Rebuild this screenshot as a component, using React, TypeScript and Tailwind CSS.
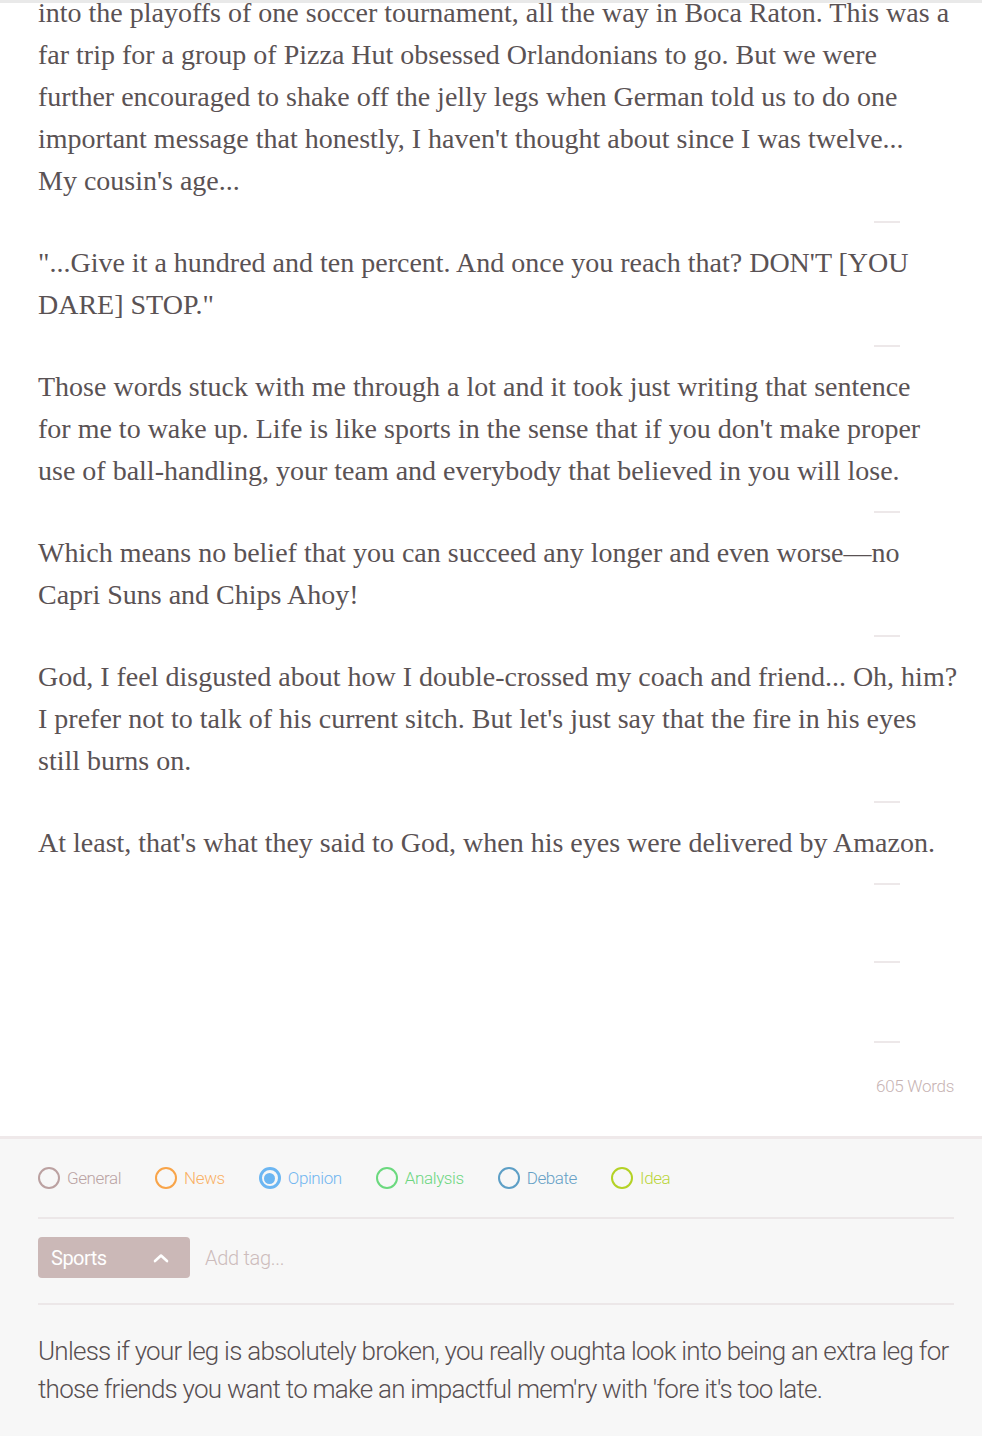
const paragraphs: string[][] = [
  [
    'into the playoffs of one soccer tournament, all the way in Boca Raton. This was a',
    'far trip for a group of Pizza Hut obsessed Orlandonians to go. But we were',
    'further encouraged to shake off the jelly legs when German told us to do one',
    "important message that honestly, I haven't thought about since I was twelve...",
    "My cousin's age...",
  ],
  [
    '"...Give it a hundred and ten percent. And once you reach that? DON\'T [YOU',
    'DARE] STOP."',
  ],
  [
    'Those words stuck with me through a lot and it took just writing that sentence',
    "for me to wake up. Life is like sports in the sense that if you don't make proper",
    'use of ball-handling, your team and everybody that believed in you will lose.',
  ],
  [
    'Which means no belief that you can succeed any longer and even worse\u2014no',
    'Capri Suns and Chips Ahoy!',
  ],
  [
    'God, I feel disgusted about how I double-crossed my coach and friend... Oh, him?',
    "I prefer not to talk of his current sitch. But let's just say that the fire in his eyes",
    'still burns on.',
  ],
  ["At least, that's what they said to God, when his eyes were delivered by Amazon."],
]

const categories = [
  { label: 'General', ring: 'border-[#bba1a1]', text: 'text-[#baa3a3]' },
  { label: 'News', ring: 'border-[#f8a449]', text: 'text-[#f9b064]' },
  { label: 'Opinion', ring: 'border-[#6cb6f2]', text: 'text-[#72b6f0]', checked: true },
  { label: 'Analysis', ring: 'border-[#6bd97e]', text: 'text-[#6cd680]' },
  { label: 'Debate', ring: 'border-[#5d9fc6]', text: 'text-[#659fc6]' },
  { label: 'Idea', ring: 'border-[#b4d225]', text: 'text-[#bad53a]' },
]

function Separator() {
  return (
    <div className="flex h-[40px] items-center justify-end pr-[54px]">
      <div className="h-[2px] w-[26px] bg-[#ede8e9]" />
    </div>
  )
}

export default function App() {
  const sans = { fontFamily: 'Roboto, sans-serif' }

  return (
    <div className="flex h-[1436px] flex-col overflow-hidden bg-white">
      {/* Editor */}
      <div className="border-t-[3px] border-[#e9e9e9] pl-[38px] pr-[28px]">
        <div className="-mt-[11px] font-['Liberation_Serif',serif] text-[28px] leading-[42px] text-[#5a5254]">
          {paragraphs.map((lines, i) => (
            <div key={i}>
              <p>
                {lines.map((line) => (
                  <span key={line} className="block whitespace-nowrap">
                    {line}
                  </span>
                ))}
              </p>
              <Separator />
            </div>
          ))}
          <div className="h-[38px]" />
          <Separator />
          <div className="h-[40px]" />
          <Separator />
        </div>

        <div
          className="mt-[14px] pb-[40px] text-right text-[17px] font-light leading-[20px] tracking-[-0.3px] text-[#c7b3b3]"
          style={sans}
        >
          605 Words
        </div>
      </div>

      {/* Publish options */}
      <div className="flex-1 border-t-[3px] border-[#efe9ea] bg-[#f7f7f7] pl-[38px] pr-[28px]" style={sans}>
        <div className="flex h-[80px] items-center gap-[34px] border-b-2 border-[#ece7e8]">
          {categories.map((c) => (
            <label key={c.label} className="flex items-center gap-[7px]">
              <span
                className={`flex h-[22px] w-[22px] items-center justify-center rounded-full ${
                  c.checked ? 'border-[3px]' : 'border-2'
                } ${c.ring}`}
              >
                {c.checked && <span className="h-[11px] w-[11px] rounded-full bg-[#6cb6f2]" />}
              </span>
              <span className={`text-[17px] font-light leading-none tracking-[-0.4px] ${c.text}`}>{c.label}</span>
            </label>
          ))}
        </div>

        <div className="flex items-center gap-[15px] border-b-2 border-[#ece7e8] pt-[18px] pb-[25px]">
          <div className="flex h-[41px] w-[152px] items-center justify-between rounded-[4px] bg-[#cbb8b7] pl-[13px] pr-[21px]">
            <span className="text-[20px] leading-none tracking-[-0.5px] text-white">Sports</span>
            <svg width="16" height="10" viewBox="0 0 16 10" fill="none">
              <path d="M2 8 L8 2.5 L14 8" stroke="white" strokeWidth="2.6" strokeLinecap="round" strokeLinejoin="round" />
            </svg>
          </div>
          <span className="text-[20px] font-light leading-none tracking-[-0.3px] text-[#cdbcbc]">Add tag...</span>
        </div>

        <div className="pt-[27px] text-[26px] font-light leading-[38px] tracking-[-0.75px] text-[#574f51]">
          <span className="block whitespace-nowrap">
            Unless if your leg is absolutely broken, you really oughta look into being an extra leg for
          </span>
          <span className="block whitespace-nowrap">
            those friends you want to make an impactful mem'ry with 'fore it's too late.
          </span>
        </div>
      </div>
    </div>
  )
}
